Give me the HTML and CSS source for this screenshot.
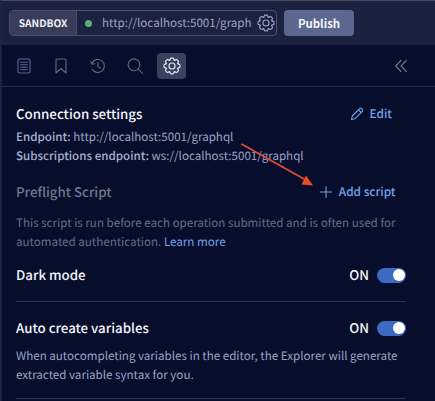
FILE: index.html
```html
<!DOCTYPE html>
<html lang="en">
<head>
<meta charset="utf-8">
<title>Explorer settings</title>
<link rel="stylesheet" href="styles.css">
</head>
<body>
<svg class="defs" width="0" height="0">
  <defs>
    <path id="tooth" d="M6.9-2.86Q8-3.1 8.3-2Q9.6-2.2 9.7-1.3V1.3Q9.6 2.2 8.3 2Q8 3.1 6.9 2.86"/>
    <symbol id="gear" viewBox="-11 -11 22 22">
      <use href="#tooth"/><use href="#tooth" transform="rotate(45)"/><use href="#tooth" transform="rotate(90)"/><use href="#tooth" transform="rotate(135)"/><use href="#tooth" transform="rotate(180)"/><use href="#tooth" transform="rotate(225)"/><use href="#tooth" transform="rotate(270)"/><use href="#tooth" transform="rotate(315)"/>
      <circle r="3.7"/>
    </symbol>
  </defs>
</svg>
<div class="app">
  <header class="topbar">
    <div class="url">
      <span class="tag">SANDBOX</span>
      <span class="dot"></span>
      <span class="address">http://localhost:5001/graph</span>
      <svg class="icon url-gear" width="18" height="18"><use href="#gear"/></svg>
    </div>
    <button class="publish">Publish</button>
  </header>
  <nav class="tools">
    <span class="tool"><svg class="icon" width="16" height="18" viewBox="0 0 16 18"><rect x="2" y="2" width="12" height="14" rx="1.5"/><path d="M4.7 5.2h6.6M4.7 7.7h6.6M4.7 10.2h6.6M4.7 12.7h6.6"/></svg></span>
    <span class="tool"><svg class="icon" width="16" height="18" viewBox="0 0 16 18"><path d="M3 3.2Q3 2 4.200 2h7.600Q13 2 13 3.200V16L8 11.500 3 16z"/></svg></span>
    <span class="tool"><svg class="icon" width="18" height="18" viewBox="0 0 18 18"><path d="M3.100 6A6.500 6.500 0 1 1 3.200 12.100M1.800 4.700 2.900 7.300 5.700 6.700M9 5.500V9.500L11.200 11"/></svg></span>
    <span class="tool"><svg class="icon" width="18" height="18" viewBox="0 0 18 18"><circle cx="8" cy="7.800" r="5.900"/><path d="m12.300 12.100 4.200 4.200"/></svg></span>
    <span class="tool active"><svg class="icon" width="18" height="18"><use href="#gear"/></svg></span>
    <span class="collapse"><svg class="icon" width="14" height="14" viewBox="0 0 14 14"><path d="M7 1.500 1.700 7 7 12.500M12.300 1.500 7 7l5.300 5.500"/></svg></span>
  </nav>
  <main class="settings">
    <section class="connection">
      <div class="row">
        <h2>Connection settings</h2>
        <a class="action edit"><svg class="icon" width="14" height="14" viewBox="0 0 14 14"><path d="M1.500 12.500 2.300 9 9.700 1.600Q10.700.700 11.800 1.700T12.400 4.300L5 11.700zM8.500 2.800l2.700 2.700"/></svg><span>Edit</span></a>
      </div>
      <p class="line"><b>Endpoint:</b> <span>http://localhost:5001/graphql</span></p>
      <p class="line subs"><b>Subscriptions endpoint:</b> <span>ws://localhost:5001/graphql</span></p>
    </section>
    <section class="preflight">
      <div class="row">
        <h2 class="muted">Preflight Script</h2>
        <a class="action add"><svg class="icon" width="14" height="14" viewBox="0 0 14 14"><path d="M7 1.500v11M1.500 7h11"/></svg><span>Add script</span></a>
      </div>
      <p class="note">This script is run before each operation submitted and is often used for<br>automated authentication. <a>Learn more</a></p>
    </section>
    <section class="dark">
      <div class="row">
        <h2>Dark mode</h2>
        <div class="state"><span>ON</span><i class="switch"></i></div>
      </div>
    </section>
    <section class="auto">
      <div class="row">
        <h2>Auto create variables</h2>
        <div class="state"><span>ON</span><i class="switch"></i></div>
      </div>
      <p class="hint">When autocompleting variables in the editor, the Explorer will generate<br>extracted variable syntax for you.</p>
    </section>
  </main>
  <svg class="arrow" width="80" height="50" viewBox="0 0 80 50"><path class="shaft" d="M1.500 4 65 39.500"/><path class="head" d="M73 45.500 61.500 44.500 66 35.500z"/></svg>
</div>
</body>
</html>
```
FILE: styles.css
```css
* { box-sizing: border-box; }
body {
  margin: 0;
  background: #060e2b;
  font: 11.6px/18.5px "Noto Sans CJK SC", "Noto Sans", sans-serif;
  color: #9aa2c6;
  text-rendering: geometricPrecision;
}
.defs { position: absolute; }
.app {
  position: relative;
  height: 401px;
  overflow: hidden;
  border-top: 1px solid #484b61;
  border-left: 2px solid #1c2444;
  white-space: nowrap;
}
.icon {
  display: block;
  flex: none;
  fill: none;
  stroke: currentColor;
  stroke-width: 1.1;
  stroke-linecap: round;
  stroke-linejoin: round;
}
.icon use { stroke-width: 1.4; }
.topbar {
  display: flex;
  height: 44px;
  padding: 9px 0 0 7px;
  gap: 7px;
  background: #1b2240;
}
.url {
  display: flex;
  align-items: center;
  width: 268px;
  height: 26px;
  border: 1px solid #464e70;
  border-radius: 4px;
  overflow: hidden;
}
.tag {
  width: 67px;
  height: 24px;
  line-height: 24px;
  text-align: center;
  background: #3a3d59;
  border-right: 1px solid #464e70;
  color: #f0f1f8;
  font-size: 10.2px;
  font-weight: 700;
}
.dot {
  width: 7px;
  height: 7px;
  margin: 0 10px 0 8px;
  border-radius: 50%;
  background: #5cad72;
}
.address { width: 150px; color: #9ba1bd; }
.url-gear { margin-left: 5px; color: #9ba1bd; }
.publish {
  width: 70px;
  height: 26px;
  padding: 0;
  border: 0;
  border-radius: 4px;
  background: #5b678f;
  color: #f5f6fb;
  font: 700 11.4px/26px "Noto Sans CJK SC", sans-serif;
}
.tools {
  display: flex;
  align-items: center;
  height: 42px;
  padding: 0 27px 0 7px;
  gap: 8px;
  border-bottom: 1px solid #20294a;
  color: #5c6997;
}
.tool {
  display: flex;
  align-items: center;
  justify-content: center;
  width: 29px;
  height: 26px;
  border-radius: 4px;
}
.active { background: #38425f; color: #e2e5ef; }
.collapse { margin-left: auto; color: #6875a0; }
.settings { padding: 17px 29px 0 14px; }
h2 { margin: 0; font-size: 13.3px; line-height: 20px; font-weight: 500; color: #f4f5fb; }
.muted { color: #71788d; }
p { margin: 0; }
.row { display: flex; justify-content: space-between; height: 20px; align-items: center; }
.action { display: flex; align-items: center; gap: 6px; color: #75a2e6; font-weight: 500; font-size: 11.8px; }
.edit { margin-right: 14px; }
.add { margin-right: 10.500px; }
.line { height: 19px; line-height: 19px; margin-top: 4px; }
.line.subs { margin-top: 0; }
.line b { font-weight: 500; color: #a9b2d2; }
.preflight { margin-top: 16px; }
.note { margin-top: 12px; height: 36px; color: #656d86; }
.note a { color: #75a2e6; }
.dark { margin-top: 15px; height: 37px; border-bottom: 1px solid #293252; }
.auto { padding-top: 16px; height: 97px; border-bottom: 1px solid #293252; }
.hint { margin-top: 9px; }
.state { display: flex; align-items: center; gap: 8px; color: #f4f5fb; font-size: 13.3px; font-weight: 500; }
.switch {
  display: flex;
  align-items: center;
  justify-content: flex-end;
  width: 29px;
  height: 15px;
  padding: 1px;
  border-radius: 8px;
  background: #3d6bc4;
}
.switch::after { content: ""; width: 12px; height: 12px; border-radius: 50%; background: #fff; }
.arrow { position: absolute; left: 238px; top: 139px; }
.shaft { fill: none; stroke: #dc4937; stroke-width: 2; }
.head { fill: #ee482b; }
```
